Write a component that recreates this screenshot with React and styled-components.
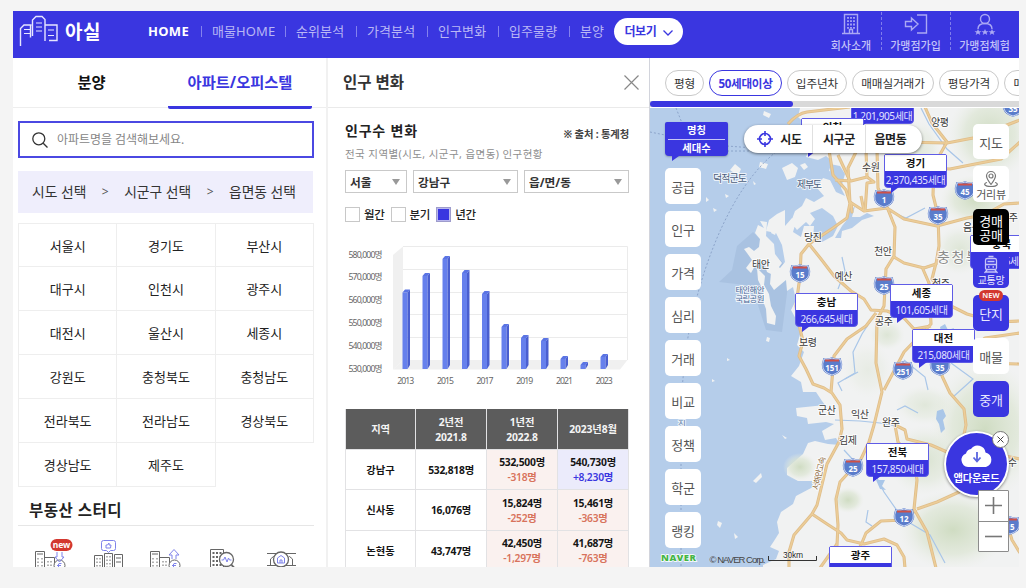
import React from "react";
import styled, { createGlobalStyle, css } from "styled-components";

const BLUE = "#3a36e0";

const Global = createGlobalStyle`
  * { box-sizing: border-box; }
  html, body { margin: 0; padding: 0; background: #f4f4f4; }
  body {
    width: 1026px; height: 588px; overflow: hidden;
    font-family: "Noto Sans", "Noto Sans CJK KR", sans-serif;
    font-size: 13px; line-height: 1.2; color: #222; white-space: nowrap;
  }
`;

const Frame = styled.div`
  width: 1006px; height: 556px; margin: 11px 0 0 13px; overflow: hidden;
  background: #fff; display: flex; flex-direction: column;
`;

/* ---------- header ---------- */
const Header = styled.header`
  flex: none; height: 47px; background: ${BLUE}; color: #fff; display: flex;
`;
const Logo = styled.div`
  display: flex; width: 135px; padding: 4px 0 0 6px; gap: 6px;
`;
const LogoText = styled.span`
  font-size: 19px; font-weight: 700; line-height: 35px; letter-spacing: 0.6px;
`;
const Menu = styled.nav`
  display: flex; align-items: center; height: 41px; width: 466px;
`;
const MenuItem = styled.a`
  font-size: 13px; color: ${(p) => (p.$active ? "#fff" : "#b9b7f5")};
  font-weight: ${(p) => (p.$active ? 700 : 400)};
  letter-spacing: ${(p) => (p.$active ? "0.3px" : "0.1px")};
  width: ${(p) => p.$w}px; flex: none; display: flex; align-items: center;
  &:not(:first-child)::before {
    content: ""; width: 1px; height: 11px; background: #8482ee; margin-right: 10px; flex: none;
  }
`;
const MoreButton = styled.button`
  flex: none; width: 69px; height: 27px; margin-top: 7px; border: 0; border-radius: 14px; background: #fff;
  color: ${BLUE}; font: inherit; font-size: 12px; font-weight: 700; display: flex;
  align-items: center; justify-content: center; gap: 6px; padding: 2px 0 0; letter-spacing: -0.3px;
`;
const UserLinks = styled.div`
  display: flex; margin-left: auto; height: 47px;
`;
const UserLink = styled.a`
  width: ${(p) => p.$w}px; display: flex; flex-direction: column; align-items: center;
  font-size: 11px; color: #c3c2f8; font-weight: 500; letter-spacing: 0;
  padding-top: 2px; position: relative; line-height: 19px;
  svg { display: block; height: 23px; }
  &:not(:first-child)::before {
    content: ""; position: absolute; left: 0; top: 1px; height: 38px; border-left: 1px dashed #7f7dec;
  }
`;

/* ---------- body ---------- */
const Body = styled.main`
  flex: 1; display: flex; min-height: 0;
`;
const Left = styled.aside`
  width: 315px; flex: none; border-right: 2px solid #f1f1f1; display: flex; flex-direction: column;
`;
const Tabs = styled.div`
  height: 50px; flex: none; border-bottom: 1px solid #eee; display: flex; padding: 0 14px 0 5px;
`;
const Tab = styled.div`
  width: 147px; text-align: center; font-size: 15.3px; font-weight: 700; line-height: 49px; height: 51px;
  color: #111;
  ${(p) => p.$active && css`color: ${BLUE}; border-bottom: 3px solid ${BLUE}; border-radius: 2px; width: 144px; margin-left: 3px;`}
`;
const Search = styled.div`
  margin: 13px 0 0 5px; width: 296px; height: 37px; border: 2px solid #4b48e2; display: flex; align-items: center;
  padding: 1px 0 0 12px; gap: 9px; font-size: 12px; color: #858585; letter-spacing: -0.05px; flex: none;
`;
const Crumbs = styled.div`
  margin: 13px 0 0 5px; width: 295px; height: 42px; background: #efeefc; display: flex; align-items: center; flex: none;
  font-size: 13.8px; color: #333; padding: 1px 17px 0 14px; justify-content: space-between;
  letter-spacing: 0;
`;
const Arrow = styled.span`
  font-size: 12px; color: #555;
`;
const Regions = styled.div`
  margin: 10px 0 0 5px; width: 296px; display: grid; grid-template-columns: repeat(3, 1fr); grid-auto-rows: 44px;
  flex: none; border-left: 1px solid #eee;
`;
const Region = styled.div`
  display: flex; align-items: center; justify-content: center; font-size: 13px; color: #222; padding-top: 3px;
  border-right: 1px solid #eee; border-bottom: 1px solid #eee;
  &:nth-child(-n + 3) { border-top: 1px solid #eee; }
`;
const StudyTitle = styled.h2`
  margin: 0 0 0 5px; width: 296px; height: 39px; line-height: 46px; padding-left: 11px; flex: none;
  font-size: 15.5px; font-weight: 700; letter-spacing: 0.5px; border-bottom: 1px solid #e6e6e6;
`;
const StudyIcons = styled.div`
  padding: 10px 0 0 21px;
  svg { display: block; }
`;

/* ---------- population panel ---------- */
const Middle = styled.section`
  width: 322px; flex: none; border-right: 1px solid #d2d4dc; display: flex; flex-direction: column;
`;
const PanelTitle = styled.div`
  height: 50px; flex: none; border-bottom: 1px solid #eaeaea; display: flex; justify-content: space-between;
  align-items: center; padding: 0 10px 0 15px; font-size: 15.5px; font-weight: 700; color: #333; line-height: 51px;
`;
const PanelBody = styled.div`
  padding: 0 20px 0 17px; display: flex; flex-direction: column;
`;
const HeadRow = styled.div`
  display: flex; justify-content: space-between; height: 35px; align-items: flex-end; margin-bottom: 5px;
`;
const Heading = styled.h3`
  margin: 0; font-size: 14px; font-weight: 700; letter-spacing: 0.8px; line-height: 24px;
`;
const Source = styled.span`
  font-size: 10.3px; font-weight: 700; color: #444; line-height: 18px; letter-spacing: -0.15px;
`;
const Desc = styled.p`
  margin: 0; font-size: 10.5px; color: #8e8e8e; letter-spacing: 0.43px; line-height: 12px; height: 22px;
`;
const Selects = styled.div`
  display: flex; gap: 6px;
`;
const Select = styled.div`
  width: ${(p) => p.$w}px; height: 23px; border: 1px solid #c9c9c9; display: flex; align-items: center;
  justify-content: space-between; padding: 2px 6px 0 4px; font-size: 11.7px; font-weight: 700; color: #333;
  &::after {
    content: ""; border: 4px solid transparent; border-top: 6px solid #999; border-bottom: 0; margin-bottom: 2px;
  }
`;
const Checks = styled.div`
  display: flex; height: 13px; margin-top: 15px; align-items: center; font-size: 11.5px; font-weight: 500;
`;
const Check = styled.label`
  display: flex; align-items: center; gap: 4px; width: 45.6px; letter-spacing: -0.3px; line-height: 15px;
  &::before {
    content: ""; width: 13px; height: 13px; border: 1px solid ${(p) => (p.$on ? "#9e9ccc" : "#c8c8c8")}; flex: none;
    background: ${(p) => (p.$on ? BLUE : "#fff")}; box-shadow: inset 0 0 0 1px ${(p) => (p.$on ? "#b9b7ee" : "#fff")};
  }
`;
const Chart = styled.svg`
  display: block; margin: 21px 0 17px -1px; width: 290px; height: 150px; flex: none;
`;
const Table = styled.div`
  display: grid; grid-template-columns: 71px 71px 71px 71px; width: 284px; grid-auto-rows: 40.5px;
`;
const Cell = styled.div`
  display: flex; flex-direction: column; align-items: center; justify-content: center; font-weight: 700;
  font-size: 10.3px; line-height: 15px; letter-spacing: -0.25px; color: #151515; padding-top: 2px;
  border-right: 1px solid #e2e2e4; border-bottom: 1px solid #e2e2e4;
  background: ${(p) => ({ head: "#5c5c5c", down: "#faf1ef", up: "#ebebfb" }[p.$tone] || "#fff")};
  ${(p) => p.$first && css`border-left: 1px solid #e2e2e4; letter-spacing: 0;`}
  ${(p) => p.$tone === "head" && css`color: #f4f4f4; letter-spacing: -0.1px;`}
`;
const Delta = styled.span`
  font-weight: 600; color: ${(p) => (p.$up ? BLUE : "#d8735c")};
`;

/* ---------- map ---------- */
const MapSide = styled.section`
  flex: 1; min-width: 0; display: flex; flex-direction: column;
`;
const Filters = styled.div`
  height: 43px; flex: none; display: flex; gap: 5px; padding: 12px 0 0 15px; overflow: hidden;
`;
const Pill = styled.div`
  flex: none; width: ${(p) => p.$w}px; height: 26px; border-radius: 13px; display: flex; align-items: center;
  justify-content: center; font-size: 11.6px; letter-spacing: -0.1px; color: #333; border: 1px solid #c9c9c9;
  padding-top: 2px;
  ${(p) => p.$on && css`color: ${BLUE}; border: 1.5px solid ${BLUE}; font-weight: 700; letter-spacing: -0.3px;`}
`;
const Scroll = styled.div`
  height: 6px; flex: none; background: #d9d9d9; margin-bottom: 1px;
  &::before { content: ""; display: block; width: 143px; height: 6px; background: ${BLUE}; border-radius: 3px; }
`;
const MapCanvas = styled.div`
  flex: 1; position: relative; overflow: hidden; background: #b5cdea;
`;
const MapDrawing = styled.svg`
  position: absolute; inset: 0; width: 369px; height: 459px;
`;
const Pin = styled.div`
  position: absolute; left: ${(p) => p.$x - 650}px; top: ${(p) => p.$y - 108}px; width: 63px; height: 34px;
  border: 1px solid #5f5ce6; border-radius: 2px 2px 4px 4px; background: ${BLUE}; text-align: center;
  &::after {
    content: ""; position: absolute; left: 6px; top: 32px; border-top: 6px solid ${BLUE};
    border-right: 8px solid transparent;
  }
`;
const PinName = styled.div`
  background: #fff; height: 16px; line-height: 17px; font-size: 10.5px; font-weight: 700; color: #111;
`;
const PinCount = styled.div`
  line-height: 19px; font-size: 10px; color: #e4e3ff; letter-spacing: -0.38px; margin: 0 -3px;
`;
const LeftTools = styled.div`
  position: absolute; left: 15px; top: 14px; display: flex; flex-direction: column; gap: 7px;
`;
const Flag = styled.div`
  width: 63px; height: 34px; margin-bottom: 5px; border-radius: 2px 2px 4px 4px; background: ${BLUE}; color: #fff;
  text-align: center; font-size: 10.3px; font-weight: 700; line-height: 17px; padding: 0 3px; position: relative;
  box-shadow: 0 1px 2px rgba(0,0,0,.25);
  span { display: block; }
  span + span { border-top: 1px solid #c8c7f5; }
  &::after {
    content: ""; position: absolute; left: 7px; top: 34px; border-top: 5px solid ${BLUE}; border-right: 7px solid transparent;
  }
`;
const Tool = styled.div`
  width: 36px; height: ${(p) => p.$h || 36}px; border-radius: 5px; font-size: ${(p) => p.$size || 13}px; display: flex;
  flex-direction: column; align-items: center; justify-content: center; letter-spacing: -0.3px; padding-top: 2px;
  line-height: ${(p) => p.$lh || 16}px; position: relative;
  color: ${(p) => ({ blue: "#e9e8ff", black: "#fff" }[p.$tone] || "#555")};
  background: ${(p) => ({ blue: BLUE, black: "#000" }[p.$tone] || "#fff")};
`;
const RightTools = styled.div`
  position: absolute; left: 323px; top: 16px; display: flex; flex-direction: column; gap: 7px;
`;
const NewTag = styled.span`
  position: absolute; top: -5px; left: 6px; width: 24px; height: 11px; border-radius: 6px; background: #d3382f;
  color: #fff; font-size: 7.5px; line-height: 11px; font-weight: 600; text-align: center; letter-spacing: 0;
`;
const LevelBar = styled.div`
  position: absolute; left: 94px; top: 17px; width: 178px; height: 28px; border-radius: 14px; background: #fff;
  box-shadow: 0 1px 3px rgba(0,0,0,.5); display: flex; align-items: center; font-size: 12px; font-weight: 700; color: #222;
`;
const Level = styled.span`
  width: ${(p) => p.$w}px; display: flex; gap: 7px; align-items: center; justify-content: center; height: 28px;
  letter-spacing: -0.3px; padding: 2px 0 0 ${(p) => p.$pad || 0}px;
  svg { margin-bottom: 2px; }
  &:not(:first-child) { border-left: 1px solid #e0e0e0; }
`;
const AppButton = styled.div`
  position: absolute; left: 294px; top: 323px; width: 65px; height: 66px; border-radius: 50%; background: ${BLUE};
  border: 2px solid #fff; box-shadow: 0 1px 3px rgba(0,0,0,.45); color: #fff; font-size: 10.3px; font-weight: 700;
  display: flex; flex-direction: column; align-items: center; padding-top: 10px; line-height: 20px; letter-spacing: -0.3px;
  svg { display: block; }
`;
const AppClose = styled.div`
  position: absolute; left: 342px; top: 323px; width: 17px; height: 17px; border-radius: 50%; background: #fff;
  border: 1px solid #777; display: flex; align-items: center; justify-content: center;
`;
const ZoomBox = styled.div`
  position: absolute; left: 328px; top: 382px; width: 31px; height: 62px; border: 1px solid #8c8c8c; background: #fff;
  border-radius: 1px; display: flex; flex-direction: column;
`;
const ZoomKey = styled.div`
  flex: 1; display: flex; align-items: center; justify-content: center;
  & + & { border-top: 1px solid #8c8c8c; }
`;

const regions = ["서울시", "경기도", "부산시", "대구시", "인천시", "광주시", "대전시", "울산시", "세종시", "강원도",
  "충청북도", "충청남도", "전라북도", "전라남도", "경상북도", "경상남도", "제주도"];
const menu = [["HOME", 53], ["매물HOME", 84], ["순위분석", 71], ["가격분석", 71], ["인구변화", 71], ["입주물량", 71], ["분양", 45]];
const bars = [[402.5, 292.5], [422.5, 276], [442.5, 259], [462, 273], [482, 294], [501.5, 327], [521, 338], [541, 341], [560.5, 359], [580.5, 365], [600.5, 357]];
const pins = [
  [851, 90, "서울", "1,201,905세대"], [801, 118, "인천", "1,024,213세대"], [884, 154, "경기", "2,370,435세대"],
  [970, 235, "충북", "218,106세대"], [795, 293, "충남", "266,645세대"], [890, 284, "세종", "101,605세대"],
  [912, 329, "대전", "215,080세대"], [866, 443, "전북", "157,850세대"], [829, 546, "광주", "201,170세대"]];
const cities = [
  [940, 126, "양평"], [871, 171, "수원"], [813, 241, "당진"], [883, 255, "천안"], [761, 268, "태안"], [843.5, 280, "예산"],
  [884, 325, "공주"], [808, 346, "보령"], [941, 287, "청주"], [972, 231, "음성"], [1009, 221, "충주"], [827, 414, "군산"],
  [860, 418, "익산"], [891, 426, "완주"], [848, 444, "김제"], [1008, 466, "장수"]];
const shields = [
  [884, 198, "1"], [938, 215, "35"], [965, 190, "45"], [800, 273, "15"], [884, 285, "25"], [832, 366, "151"],
  [940, 366, "35"], [903, 370, "251"], [853, 467, "25"], [904, 517, "12"], [1010, 525, "15"], [1013, 107, "35"]];
const roads = [
  "M788 124C795 116 800 113 807 112L850 107",
  "M820 120L829 150L833 175L846 190L850 203L847 218L833 228L809 244L801 254L800 276L796 306L800 329L803 341L799 356L806 369L813 384L824 388L832 393L840 405L842 429L839 442L827 464L817 505L812 514L794 535L789 552L789 569",
  "M809 244L821 259L834 276L851 291L864 299L871 310L887 311L904 318L914 329L931 326",
  "M876 313L866 326L847 339L834 356L831 392",
  "M877 150L878 188L887 207L895 227L894 256L886 269L884 306L877 320L876 363L882 392L874 425L869 442L861 459L840 482L836 499L838 525L837 545L830 560",
  "M850 202L864 211L887 208L904 219L937 226L967 218L984 215L1004 204L1020 203",
  "M925 107L932 123L947 142L934 165L933 195L938 215L939 246L936 264L924 268L904 263L894 257",
  "M922 267L929 283L931 324L904 352L884 390",
  "M936 263L932 279L951 306L967 314L995 322L1020 321",
  "M942 362L942 376L950 393L964 409L966 425L959 459L959 492L937 502L917 509",
  "M895 425L905 430L907 439L931 445L947 452L985 452L1020 459",
  "M895 425L898 442L914 460L917 480L914 509L927 532L936 568",
  "M916 510L904 520L881 521L866 533L861 545",
  "M812 514L827 524L841 533L847 540L864 544L884 539L897 545L904 557L905 568",
  "M835 180L851 181L867 177L874 182L867 183L865 212",
  "M857 150L848 168L850 203", "M867 177L866 150", "M838 155L850 181",
  "M900 142L947 143L973 138L1020 120", "M925 168L950 169L970 165L1001 159L1020 142",
  "M851 203L852 212L851 206", "M864 211L861 196", "M982 363L1020 364",
  "M967 355L985 338L1020 333", "M1003 510L1012 540L1020 553", "M837 544L820 568", "M861 545L850 568"];
const minor = [
  "M921 108L929 124L947 149L963 163", "M889 211L906 218L925 208", "M842 257L845 271L838 289",
  "M876 313L862 334L853 352L855 373L838 383L842 391", "M835 420L860 421L880 423L895 426", "M900 313L931 318L950 310",
  "M876 476L884 492L898 512", "M868 510L866 522L872 526", "M897 410L905 406L918 413", "M951 363L973 379L953 397",
  "M904 360L925 377L928 390", "M905 520L930 535L945 563", "M858 372L845 379", "M844 450L855 462"];
const islands = [
  "M730 170l5-6l6 5l-3 7z", "M760 162l8 2l-2 5l-7-2z", "M764 111l7 3l-2 4l-6-3z", "M782 168l10-5l6 5l-3 9l-8 3z",
  "M800 165l5-2l3 4l-4 3z", "M753 481l8-8l1 4l-6 6z", "M718 521l4 2l-2 5l-3-3z", "M734 533l4 4l-3 2z", "M782 435l5 3l-2 1z",
  "M767 337l3 1l-1 4l-3-1z", "M727 358l3 2l-3 1z", "M712 379l3 2l-3 1z", "M706 197l3 3l-3 2z", "M713 208l4 2l-3 2z",
  "M773 228l4 2l-2 5l-4-2z", "M725 194l4 2l-3 2z", "M753 181l3 3l-2 1z", "M770 143l3-3l2 4z", "M790 138l6 1l-4 5z"];

const Study = () => (
  <svg width="290" height="34" viewBox="34 536 290 34" fill="none" stroke="#666" strokeWidth="1">
    <path d="M35.500 570V551.500h9V570M44.500 557.500h10V570M37 554h6" />
    <path d="M38 558v9M42 558v9M48 561v7M51 561v7" strokeDasharray="1.500 2" />
    <circle cx="59.500" cy="565.500" r="5.500" fill="#fff" />
    <path d="M57 552v5h-2l4.500 5l4.500-5h-2v-5M61.500 563.500h-2.500l-1 2l1 2h2M57 565.500h4" stroke="#7f83ea" />
    <rect x="50.500" y="539" width="22" height="12" rx="6" fill="#d3382f" stroke="none" />
    <text x="61.500" y="548" textAnchor="middle" fontSize="8.500" fontWeight="700" fill="#fff" stroke="none">new</text>
    <path d="M94.500 570V555.500h8V570M104.500 570V553.500h8V570M114.500 570V554.500h8V570M116 558h5M116 562h5" />
    <path d="M97 558v10M100 558v10M107 556v12M110 556v12" strokeDasharray="1.500 2" />
    <path d="M103.500 540.500h10q2 0 2 2v6q0 2-2 2h-3l-2 2l-2-2h-3q-2 0-2-2v-6q0-2 2-2zM106 545h1.500l1.500-2v2h2l-.5 3h-4.500z" stroke="#7f83ea" />
    <path d="M150.500 570V551.500h9V570M159.500 557.500h10V570M152 554h6" />
    <path d="M153 558v10M157 558v10M163 561v7M166 561v7" strokeDasharray="1.500 2" />
    <circle cx="174.500" cy="565.500" r="5.500" fill="#fff" />
    <path d="M172 559v-4h-3l5-5.500l5 5.500h-3v4M176.500 563.500h-2.500l-1 2l1 2h2M172 565.500h4" stroke="#7f83ea" />
    <path d="M210.500 570V549.500h13V570" />
    <path d="M213.500 552v16M217 552v16M220.500 552v16" strokeWidth="2" strokeDasharray="2 2" />
    <circle cx="226.500" cy="559.500" r="7" fill="#fff" strokeWidth="1.300" />
    <path d="M231.500 565l5 5" strokeWidth="1.800" />
    <path d="M221.500 560h2l1.500-3l2 5l1.500-4l1 2h2" stroke="#7f83ea" />
    <path d="M267 553.500h29M267 565.500h29M270.500 565v-6l3-2.500l3 2.500v6M286.500 565v-6l3-2.500l3 2.500v6" />
    <circle cx="281" cy="559.500" r="7.500" fill="#fff" strokeWidth="1.300" />
    <path d="M277.500 558l3.500-2.500l3.500 2.500v5h-7zM280 563v-3h2v3" stroke="#7f83ea" />
  </svg>
);

const KoreaMap = () => (
  <MapDrawing viewBox="650 108 369 459">
    <defs>
      <radialGradient id="hill"><stop offset="0" stopColor="#cfdcc2" /><stop offset=".6" stopColor="#dce5d3" stopOpacity=".7" /><stop offset="1" stopColor="#e9ede5" stopOpacity="0" /></radialGradient>
    </defs>
    <path fill="#a9c2e1" d="M719 282L732 270L737 246L753 232L790 270L782 332L766 330L757 302L745 285z" />
    <path fill="#f1f2f2" d="M800 108L798 117L806 124L801 133L809 150L806 157L818 160L826 156L832 161L829 171L840 174L836 182L823 178L817 188L824 196L814 202L806 198L802 206L795 211L791 222L797 230L806 222L810 226L815 219L810 213L822 208L833 216L838 226L833 236L822 242L813 239L814 226L804 226L801 237L793 232L796 222L792 218L785 226L785 210L777 214L769 220L766 231L776 233L782 245L785 262L780 268L772 261L770 284L774 290L786 280L787 291L793 287L796 300L791 310L797 321L801 331L797 345L804 352L799 366L791 376L801 382L803 392L816 392L822 401L825 405L796 408L797 416L807 418L808 424L826 422L834 424L822 431L825 440L836 438L840 445L828 444L815 441L808 443L803 454L787 468L787 475L798 481L812 481L813 487L796 496L793 504L781 512L777 522L779 533L774 541L770 547L779 551L776 559L763 565L763 569H1020V107z" />
    <path fill="#f1f2f2" d="M760 221l7 1l-1 14l8 8l1 10l7 9l-9 12l-6-3l-3-10l-8 2l-5 9l-5-5l6-8l-5-7l-3-4l5-2l5 4l5-4l1-8l-5-6l3-8l6 3z" />
    <path fill="#f1f2f2" d="M757 268l8 8l-1 9l5 9l2 12l5 10l-1 9l-8-2l-1-14l-3-8l1-9l-6-12z" />
    <path fill="#b5cdea" d="M842 226L835 238L841 238L842 231L852 228L862 220L874 216L867 213L860 217L852 217L855 206L849 212L846 221zM830 164l10 2l5 8l-4 14l4 8l-9-4l-6-12zM806 312l6 0l0 8l-5-2z" />
    <g fill="url(#hill)">
      <ellipse cx="990" cy="135" rx="42" ry="45" /><ellipse cx="975" cy="200" rx="35" ry="25" /><ellipse cx="920" cy="150" rx="22" ry="30" opacity=".5" />
      <ellipse cx="985" cy="430" rx="55" ry="70" /><ellipse cx="925" cy="460" rx="38" ry="35" opacity=".7" /><ellipse cx="953" cy="530" rx="55" ry="40" /><ellipse cx="887" cy="335" rx="18" ry="15" opacity=".6" />
      <ellipse cx="800" cy="467" rx="17" ry="14" /><ellipse cx="848" cy="500" rx="16" ry="13" /><ellipse cx="960" cy="250" rx="25" ry="25" opacity=".6" /><ellipse cx="840" cy="305" rx="20" ry="20" opacity=".35" />
      <ellipse cx="868" cy="370" rx="25" ry="28" opacity=".3" /><ellipse cx="925" cy="405" rx="30" ry="20" opacity=".5" />
    </g>
    <g fill="#f1f2f2">{islands.map((d) => <path key={d} d={d} />)}</g>
    <g fill="none" stroke="#a9c6e8" strokeWidth="1.200">{minor.map((d) => <path key={d} d={d} />)}</g>
    <path fill="#a9c6e8" d="M937 411l6-2l3 7l-3 4l2 9l-4 4l-2-9l-3-5zM940 327l5-3l3 6l6-2l-3 7l-9 1zM876 480l9 0l-3 6l4 4l-6-1z" />
    <g fill="none" strokeLinejoin="round" stroke="#dfbd8a" strokeWidth="3.100">{roads.map((d) => <path key={d} d={d} />)}</g>
    <g fill="none" strokeLinejoin="round" stroke="#eccd98" strokeWidth="1.500">{roads.map((d) => <path key={d} d={d} />)}</g>
    <g fill="none" stroke="#8199c2" strokeWidth=".8" strokeDasharray="2 2">
      <path d="M776 152C730 188 700 270 688 337C683 375 681 390 681 430V567" />
      <path d="M650 132l15 3M727 146l80 6M676 108l6 15M727 151h50" />
    </g>
    <g fontSize="10" fill="#3c3c3c" textAnchor="middle" stroke="#fff" strokeWidth="2" strokeOpacity=".75" paintOrder="stroke" strokeLinejoin="round">
      {cities.map(([x, y, t]) => <text key={t} x={x} y={y} textLength="18">{t}</text>)}
      <text x="730" y="182" fill="#4c5f7c" textLength="34">덕적군도</text>
      <text x="809.500" y="188" fill="#4c5f7c" textLength="25">제부도</text>
      <g fill="#4c6a98" fontSize="8.500"><text x="750" y="292.500" textLength="29">태안해안</text><text x="750" y="301.500" textLength="29">국립공원</text></g>
      <text x="958" y="262" fontSize="14" fill="#8b8b8b" textLength="42">충청북</text>
      <text x="822" y="474" fontSize="8.500" fill="#8b6a3d" transform="rotate(-77 822 474)" textLength="34">서해안고속</text>
      <text x="682" y="427" fontSize="8.500" fill="#5b7ba5">진</text>
    </g>
    {shields.map(([x, y, n]) => (
      <g key={n + x}>
        <path d={`M${x - 8} ${y - 7}q4 1 8-1q4 2 8 1q2 5 1 9q-2 5-9 7q-7-2-9-7q-1-4 1-9z`} fill="#5a7ccb" stroke="#5a7ccb" strokeWidth="1.800" />
        <path d={`M${x - 8} ${y - 7}q4 1 8-1q4 2 8 1q2 5 1 9q-2 5-9 7q-7-2-9-7q-1-4 1-9z`} fill="#5a7ccb" stroke="#e8eefb" strokeWidth=".8" />
        <path d={`M${x - 7} ${y - 5.500}h14`} stroke="#cf5148" strokeWidth="2" />
        <text x={x} y={y + 5} fontSize="8" fontWeight="700" fill="#fff" textAnchor="middle">{n}</text>
      </g>
    ))}
    <text x="661" y="561" fontSize="9.500" fontWeight="900" fill="#45b549" stroke="#fff" strokeWidth="1.500" paintOrder="stroke" textLength="35" fontFamily="Open Sans">NAVER</text>
    <text x="709.500" y="562.500" fontSize="9.500" fill="#444" textLength="56" fontFamily="Liberation Sans">© NAVER Corp.</text>
    <path d="M768.500 556v4.500h48V556" fill="none" stroke="#333" />
    <text x="783" y="558" fontSize="8.500" fill="#222" stroke="#fff" strokeWidth="1" paintOrder="stroke" textLength="20" fontFamily="Liberation Sans">30km</text>
  </MapDrawing>
);

const PopulationChart = () => (
  <Chart viewBox="344 242 290 150">
    <path d="M393 369.500V255L403 246.500V360L393 369.500z" fill="#f0f0f0" />
    <path d="M393 369.500L403 360H627.500L620 369.500z" fill="#f0f0f0" />
    <path d="M403 246.500H627.500V360M403 269.500H627.500M403 292.500H627.500M403 314.500H627.500M403 337.500H627.500" fill="none" stroke="#ebebeb" />
    {bars.map(([x, y]) => (
      <g key={x}>
        <path d={`M${x} ${y}h5v${369 - y}h-5z`} fill="#6680ec" />
        <path d={`M${x + 5} ${y}l2.500-3v${368 - y}l-2.500 4z`} fill="#4a5fd0" />
        <path d={`M${x} ${y}l2.500-3h5l-2.500 3z`} fill="#5a74e4" />
      </g>
    ))}
    <g fontSize="8.700" fill="#666" textAnchor="end">
      {[580, 570, 560, 550, 540, 530].map((n, i) => (
        <text key={n} x="382.500" y={257.500 + i * 22.800} textLength="34">{n},000명</text>
      ))}
    </g>
    <g fontSize="8.700" fill="#666" textAnchor="middle">
      {[2013, 2015, 2017, 2019, 2021, 2023].map((n, i) => (
        <text key={n} x={405.700 + i * 39.700} y="384" textLength="17">{n}</text>
      ))}
    </g>
  </Chart>
);

const rows = [
  ["강남구", "532,818명", "532,500명", "-318명", "540,730명", "+8,230명"],
  ["신사동", "16,076명", "15,824명", "-252명", "15,461명", "-363명"],
  ["논현동", "43,747명", "42,450명", "-1,297명", "41,687명", "-763명"]];

export default function App() {
  return (
    <>
      <Global />
      <Frame>
        <Header>
          <Logo>
            <svg width="40" height="32" viewBox="19 15 40 32" fill="none" stroke="#e6e5ff" strokeWidth="1.400">
              <path d="M20.500 46V28.500l3.500-3.500h7.500M30.500 25V37.500M32.500 36V20l3.500-3.500h6l3 3V41M45 25h12v15.500h-8" />
              <path d="M24 29.500h6M24 33.500h6M36 23h6M36 27h6M36 31h6M48 30h6M48 35.500h6" strokeWidth="1.200" />
            </svg>
            <LogoText>아실</LogoText>
          </Logo>
          <Menu>
            {menu.map(([t, w], i) => <MenuItem key={t} $active={i === 0} $w={w}>{t}</MenuItem>)}
          </Menu>
          <MoreButton>더보기
            <svg width="10" height="6" viewBox="0 0 10 6" fill="none" stroke={BLUE} strokeWidth="1.300"><path d="M.5.500L5 5L9.500.500" /></svg>
          </MoreButton>
          <UserLinks>
            <UserLink $w={60}>
              <svg width="20" height="23" viewBox="0 0 20 23" fill="none" stroke="#aaa8f4"><path d="M3.500 20V1.500h13V20M1 20.500h18M8.500 20v-3.500h3V20" strokeWidth="1.400" /><path d="M7 4v12M10 4v12M13 4v12" strokeWidth="1.800" strokeDasharray="1.800 1.500" /></svg>
              회사소개
            </UserLink>
            <UserLink $w={69}>
              <svg width="24" height="23" viewBox="0 0 24 23" fill="none" stroke="#aaa8f4" strokeWidth="1.400"><path d="M13 2h9.500v18H13M1.500 8.500h6V5l6.500 6l-6.500 6v-3.500h-6z" /></svg>
              가맹점가입
            </UserLink>
            <UserLink $w={69}>
              <svg width="24" height="23" viewBox="0 0 24 23" fill="none" stroke="#aaa8f4" strokeWidth="1.400"><circle cx="12" cy="6" r="4.500" /><path d="M5 16q0-5.500 7-5.500T19 16" /><path fill="#aaa8f4" stroke="none" d="M5 16l1 2.200h2.500l-2 1.500l.8 2.300L5 20.600L2.700 22l.8-2.300l-2-1.500H4zM12 16l1 2.200h2.500l-2 1.500l.8 2.300L12 20.600L9.700 22l.8-2.300l-2-1.500H11zM19 16l1 2.200h2.500l-2 1.500l.8 2.300L19 20.600L16.700 22l.8-2.300l-2-1.500H18z" /></svg>
              가맹점체험
            </UserLink>
          </UserLinks>
        </Header>
        <Body>
          <Left>
            <Tabs><Tab>분양</Tab><Tab $active>아파트/오피스텔</Tab></Tabs>
            <Search>
              <svg width="16" height="16" viewBox="0 0 16 16" fill="none" stroke="#333" strokeWidth="1.300"><circle cx="6.800" cy="6.800" r="6" /><path d="M11.200 11.200L15.500 15.500" /></svg>
              아파트명을 검색해보세요.
            </Search>
            <Crumbs><span>시도 선택</span><Arrow>&gt;</Arrow><span>시군구 선택</span><Arrow>&gt;</Arrow><span>읍면동 선택</span></Crumbs>
            <Regions>{regions.map((r) => <Region key={r}>{r}</Region>)}</Regions>
            <StudyTitle>부동산 스터디</StudyTitle>
            <StudyIcons><Study /></StudyIcons>
          </Left>
          <Middle>
            <PanelTitle>인구 변화
              <svg width="15" height="15" viewBox="0 0 15 15" stroke="#888" strokeWidth="1.200"><path d="M.5.500l14 14M14.500.500l-14 14" /></svg>
            </PanelTitle>
            <PanelBody>
              <HeadRow><Heading>인구수 변화</Heading><Source>※ 출처 : 통계청</Source></HeadRow>
              <Desc>전국 지역별(시도, 시군구, 읍면동) 인구현황</Desc>
              <Selects><Select $w={62}>서울</Select><Select $w={105}>강남구</Select><Select $w={105}>읍/면/동</Select></Selects>
              <Checks><Check>월간</Check><Check>분기</Check><Check $on>년간</Check></Checks>
              <PopulationChart />
              <Table>
                <Cell $tone="head" $first>지역</Cell>
                <Cell $tone="head"><span>2년전</span><span>2021.8</span></Cell>
                <Cell $tone="head"><span>1년전</span><span>2022.8</span></Cell>
                <Cell $tone="head">2023년8월</Cell>
                {rows.map(([n, a, b, bd, c, cd]) => (
                  <React.Fragment key={n}>
                    <Cell $first>{n}</Cell>
                    <Cell>{a}</Cell>
                    <Cell $tone="down">{b}<Delta>{bd}</Delta></Cell>
                    <Cell $tone={cd[0] === "+" ? "up" : "down"}>{c}<Delta $up={cd[0] === "+"}>{cd}</Delta></Cell>
                  </React.Fragment>
                ))}
              </Table>
            </PanelBody>
          </Middle>
          <MapSide>
            <Filters>
              <Pill $w={39}>평형</Pill><Pill $w={73} $on>50세대이상</Pill><Pill $w={60}>입주년차</Pill>
              <Pill $w={82}>매매실거래가</Pill><Pill $w={60}>평당가격</Pill><Pill $w={40}>매물</Pill>
            </Filters>
            <Scroll />
            <MapCanvas>
              <KoreaMap />
              {pins.map(([x, y, n, c]) => <Pin key={n} $x={x} $y={y}><PinName>{n}</PinName><PinCount>{c}</PinCount></Pin>)}
              <LeftTools>
                <Flag><span>명칭</span><span>세대수</span></Flag>
                {["공급", "인구", "가격", "심리", "거래", "비교", "정책", "학군", "랭킹"].map((t) => <Tool key={t}>{t}</Tool>)}
              </LeftTools>
              <LevelBar>
                <Level $w={68} $pad={3}>
                  <svg width="16" height="16" viewBox="0 0 16 16" fill="none" stroke={BLUE} strokeWidth="1.600"><circle cx="8" cy="8" r="5.500" /><path d="M8 0v5M8 11v5M0 8h5M11 8h5" /></svg>
                  시도
                </Level>
                <Level $w={53}>시구군</Level><Level $w={50}>읍면동</Level>
              </LevelBar>
              <RightTools>
                <Tool $h={35}>지도</Tool>
                <Tool $size={11} $lh={13}>
                  <svg width="18" height="18" viewBox="0 0 18 18" fill="none" stroke="#777" strokeWidth="1.200"><path d="M9 14.500C6 10.500 4.500 8.500 4.500 6a4.500 4.500 0 0 1 9 0c0 2.500-1.500 4.500-4.500 8.500z" /><circle cx="9" cy="6" r="2" /><path d="M5 12.500c-4 1-3 4 4 4s8-3 4-4" /></svg>
                  거리뷰
                </Tool>
                <Tool $tone="black" $lh={14.5}><span>경매</span><span>공매</span></Tool>
                <Tool $tone="blue" $size={10} $lh={13}>
                  <svg width="18" height="19" viewBox="0 0 18 19" fill="none" stroke="#c5c4f8" strokeWidth="1.300"><path d="M5 3.500h8q1.500 0 1.500 2V13q0 1.500-1.500 1.500H5Q3.500 14.500 3.500 13V5.500q0-2 1.500-2zM3.500 9.500h11M6.500 1.500h5M5 15l-2.500 3M13 15l2.500 3M4 17h10" /><path d="M6 12h1.500M10.500 12H12M5.500 6.500h7" /></svg>
                  교통망
                </Tool>
                <Tool $tone="blue"><NewTag>NEW</NewTag>단지</Tool>
                <Tool>매물</Tool>
                <Tool $tone="blue">중개</Tool>
              </RightTools>
              <AppButton>
                <svg width="34" height="25" viewBox="0 0 34 25"><path fill="#fff" d="M8 24a7 7 0 0 1-2-13.500A6 6 0 0 1 11 6a8 8 0 0 1 14.500 3.500A7.500 7.500 0 0 1 26 24z" /><path d="M17 9v9M13.500 14.500l3.500 4l3.500-4" fill="none" stroke="#5a65df" strokeWidth="1.800" /></svg>
                앱다운로드
              </AppButton>
              <AppClose><svg width="7" height="7" viewBox="0 0 7 7" stroke="#444"><path d="M.5.500l6 6M6.500.500l-6 6" /></svg></AppClose>
              <ZoomBox>
                <ZoomKey><svg width="17" height="17" viewBox="0 0 17 17" stroke="#777" strokeWidth="1.600"><path d="M8.500 0v17M0 8.500h17" /></svg></ZoomKey>
                <ZoomKey><svg width="17" height="17" viewBox="0 0 17 17" stroke="#777" strokeWidth="1.600"><path d="M0 8.500h17" /></svg></ZoomKey>
              </ZoomBox>
            </MapCanvas>
          </MapSide>
        </Body>
      </Frame>
    </>
  );
}
